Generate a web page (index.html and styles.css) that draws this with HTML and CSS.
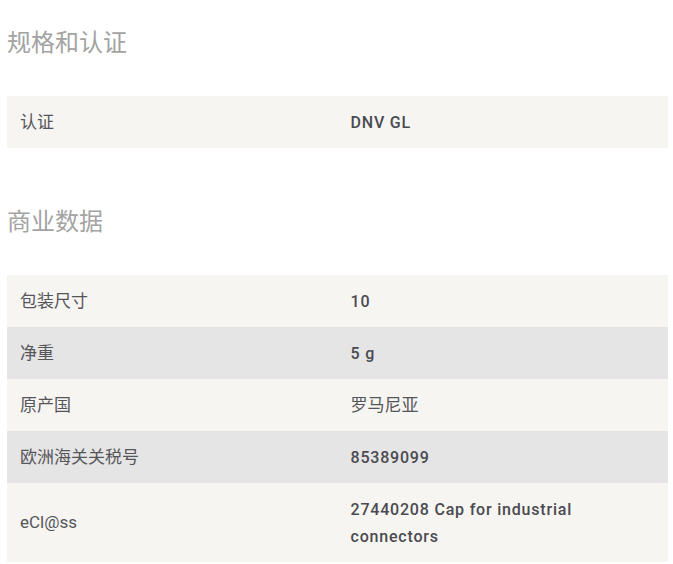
FILE: index.html
```html
<!DOCTYPE html>
<html lang="zh">
<head>
<meta charset="utf-8">
<link rel="stylesheet" href="styles.css">
</head>
<body>
<section class="block">
  <h2 class="title">规格和认证</h2>
  <table class="specs">
    <tr class="light"><td class="label">认证</td><td class="value">DNV GL</td></tr>
  </table>
</section>
<section class="block second">
  <h2 class="title">商业数据</h2>
  <table class="specs">
    <tr class="light"><td class="label">包装尺寸</td><td class="value">10</td></tr>
    <tr class="dark"><td class="label">净重</td><td class="value">5 g</td></tr>
    <tr class="light"><td class="label">原产国</td><td class="value cjk">罗马尼亚</td></tr>
    <tr class="dark"><td class="label">欧洲海关关税号</td><td class="value">85389099</td></tr>
    <tr class="light"><td class="label">eCl@ss</td><td class="value">27440208 Cap for industrial connectors</td></tr>
  </table>
</section>
</body>
</html>
```
FILE: styles.css
```css
html, body {
  margin: 0;
  padding: 0;
  background: #ffffff;
}
body {
  padding: 0 5px 0 7px;
  font-family: Roboto, "Noto Sans CJK SC", sans-serif;
}
.block {
  padding-top: 26px;
}
.block.second {
  padding-top: 57px;
}
.title {
  margin: 0 0 40px 0;
  font-size: 24px;
  line-height: 30px;
  font-weight: 400;
  color: #a3a3a3;
  font-family: "Noto Sans CJK SC", sans-serif;
}
.specs {
  width: 661px;
  border-collapse: collapse;
  table-layout: fixed;
}
.specs td {
  width: 50%;
  padding: 12.5px 13px;
  line-height: 27px;
  vertical-align: middle;
}
.light { background: #f6f5f2; }
.dark { background: #e5e5e5; }
.label {
  font-size: 17px;
  color: #55555a;
  font-family: Roboto, "Noto Sans CJK SC", sans-serif;
}
.value {
  font-size: 16px;
  font-weight: 500;
  color: #4a4a50;
  letter-spacing: 0.8px;
  font-family: Roboto, "Noto Sans CJK SC", sans-serif;
}
.value.cjk {
  font-size: 17px;
  font-weight: 400;
  letter-spacing: 0;
  color: #55555a;
}
```
